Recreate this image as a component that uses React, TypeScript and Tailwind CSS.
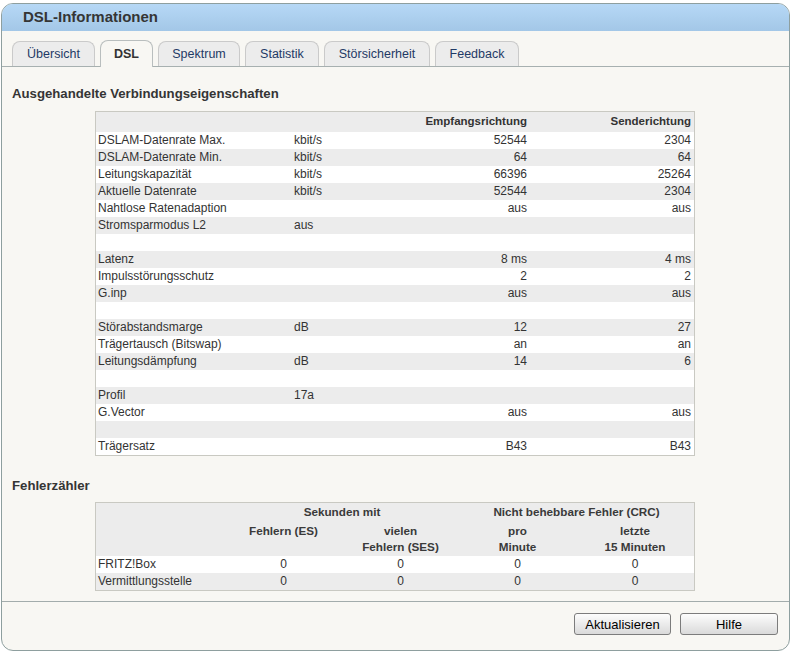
import React from 'react';

type Row = [string, string, string, string];

const props: Row[] = [
  ['DSLAM-Datenrate Max.', 'kbit/s', '52544', '2304'],
  ['DSLAM-Datenrate Min.', 'kbit/s', '64', '64'],
  ['Leitungskapazität', 'kbit/s', '66396', '25264'],
  ['Aktuelle Datenrate', 'kbit/s', '52544', '2304'],
  ['Nahtlose Ratenadaption', '', 'aus', 'aus'],
  ['Stromsparmodus L2', 'aus', '', ''],
  ['', '', '', ''],
  ['Latenz', '', '8 ms', '4 ms'],
  ['Impulsstörungsschutz', '', '2', '2'],
  ['G.inp', '', 'aus', 'aus'],
  ['', '', '', ''],
  ['Störabstandsmarge', 'dB', '12', '27'],
  ['Trägertausch (Bitswap)', '', 'an', 'an'],
  ['Leitungsdämpfung', 'dB', '14', '6'],
  ['', '', '', ''],
  ['Profil', '17a', '', ''],
  ['G.Vector', '', 'aus', 'aus'],
  ['', '', '', ''],
  ['Trägersatz', '', 'B43', 'B43'],
];

const errors = [
  ['FRITZ!Box', '0', '0', '0', '0'],
  ['Vermittlungsstelle', '0', '0', '0', '0'],
];

const tabs = [
  { label: 'Übersicht', w: 'w-[83px]' },
  { label: 'DSL', w: 'w-[53px]', active: true },
  { label: 'Spektrum', w: 'w-[82px]' },
  { label: 'Statistik', w: 'w-[74px]' },
  { label: 'Störsicherheit', w: 'w-[106px]' },
  { label: 'Feedback', w: 'w-[84px]' },
];

function Tab({ label, w, active }: { label: string; w: string; active?: boolean }) {
  if (active) {
    return (
      <div className={`${w} h-[27px] -mb-[1px] rounded-t-[8px] border border-b-0 border-[#b9bebe] bg-[#f8f7f3] flex items-center justify-center font-bold text-[12.5px] text-[#333]`}>
        {label}
      </div>
    );
  }
  return (
    <div className={`${w} h-[25px] mt-[1px] rounded-t-[8px] border border-b-0 border-[#cacaca] bg-[#ececec] flex items-center justify-center text-[12.5px] text-[#1f3a66]`}>
      {label}
    </div>
  );
}

function Button({ children, w }: { children: React.ReactNode; w: string }) {
  return (
    <button className={`${w} h-[22px] rounded-[3px] border border-[#7c7c7c] bg-gradient-to-b from-[#fdfdfd] to-[#dadada] text-[13px] font-normal leading-none text-black`}>
      {children}
    </button>
  );
}

export default function App() {
  return (
    <div className="w-[791px] h-[653px] bg-white pt-[3px] pl-[1px] font-['Liberation_Sans',Arial,sans-serif]">
      <div className="w-[789px] rounded-[12px] border border-[#8e9f9f] overflow-hidden bg-[#f8f7f3]">
        <div className="h-[27px] bg-gradient-to-b from-[#b6d8f6] to-[#a3c7e7] pl-[21px] flex items-center">
          <span className="text-[15px] font-bold text-[#353535]">DSL-Informationen</span>
        </div>

        <div className="mt-[9px] flex gap-[5px] pl-[10px] border-b border-[#a7b0b0] h-[27px] items-start">
          {tabs.map(t => (
            <Tab key={t.label} {...t} />
          ))}
        </div>

        <div className="pl-[10px] mt-[19px] text-[13.2px] leading-[15px] font-bold text-[#353535]">
          Ausgehandelte Verbindungseigenschaften
        </div>

        <div className="ml-[93px] mt-[10px] w-[600px] border border-[#c9c9c2] text-[12px] text-[#333]">
          <div className="grid grid-cols-[198px_106px_127px_1fr] h-[20px] items-center bg-[#ececec] font-bold text-[11.5px]">
            <div />
            <div />
            <div className="text-right">Empfangsrichtung</div>
            <div className="text-right pr-[3px]">Senderichtung</div>
          </div>
          {props.map((r, i) => (
            <div
              key={i}
              className={`grid grid-cols-[198px_106px_127px_1fr] h-[17px] leading-[17px] ${i % 2 === 0 ? 'bg-white' : 'bg-[#ececec]'}`}
            >
              <div className="pl-[2px] whitespace-nowrap">{r[0]}</div>
              <div>{r[1]}</div>
              <div className="text-right">{r[2]}</div>
              <div className="text-right pr-[3px]">{r[3]}</div>
            </div>
          ))}
        </div>

        <div className="pl-[10px] mt-[22px] text-[13.2px] leading-[15px] font-bold text-[#353535]">
          Fehlerzähler
        </div>

        <div className="ml-[93px] mt-[9px] w-[600px] border border-[#c9c9c2] text-[12px] text-[#333]">
          <div className="bg-[#ececec] font-bold text-[11.7px] text-[#3a3a3a]">
            <div className="grid grid-cols-[129px_234px_1fr] h-[18px] items-center">
              <div />
              <div className="text-center">Sekunden mit</div>
              <div className="text-center">Nicht behebbare Fehler (CRC)</div>
            </div>
            <div className="grid grid-cols-[129px_117px_117px_117px_1fr] h-[35px] pt-[2px] leading-[16px] text-center">
              <div />
              <div>Fehlern (ES)</div>
              <div>vielen<br />Fehlern (SES)</div>
              <div>pro<br />Minute</div>
              <div>letzte<br />15 Minuten</div>
            </div>
          </div>
          {errors.map((r, i) => (
            <div
              key={i}
              className={`grid grid-cols-[129px_117px_117px_117px_1fr] h-[17px] leading-[17px] ${i % 2 === 0 ? 'bg-white' : 'bg-[#ececec]'}`}
            >
              <div className="pl-[2px]">{r[0]}</div>
              <div className="text-center">{r[1]}</div>
              <div className="text-center">{r[2]}</div>
              <div className="text-center">{r[3]}</div>
              <div className="text-center">{r[4]}</div>
            </div>
          ))}
        </div>

        <div className="mt-[10px] border-t border-[#a3acac] h-[49px] flex justify-end items-start pt-[11px] pr-[11px] gap-[9px]">
          <Button w="w-[97px]">Aktualisieren</Button>
          <Button w="w-[98px]">Hilfe</Button>
        </div>
      </div>
    </div>
  );
}
